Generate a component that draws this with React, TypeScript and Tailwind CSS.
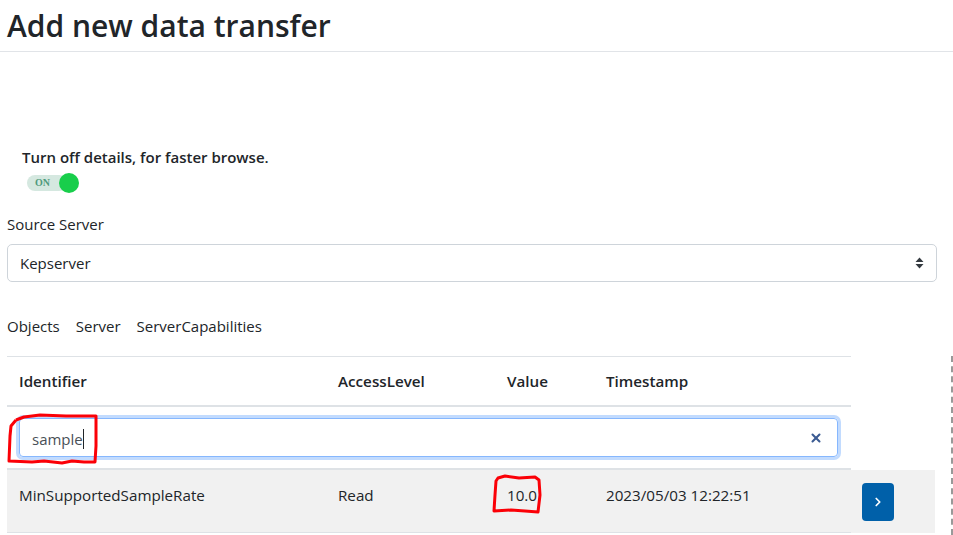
import { ChevronRight, X } from 'lucide-react';

const font = 'font-["Open_Sans","Noto_Sans",sans-serif]';

function Toggle() {
  return (
    <div className="relative ml-[20px] mt-[6px] h-[20px] w-[52px]">
      <div className="absolute left-0 top-[2px] flex h-[16px] w-[40px] items-center rounded-full bg-[#d5e8e0] pl-[8px]">
        <span className='font-["Liberation_Serif",serif] text-[10px] font-bold leading-none text-[#4f9a7c]'>ON</span>
      </div>
      <div className="absolute right-0 top-0 h-[20px] w-[20px] rounded-full bg-[#18ce4b]" />
    </div>
  );
}

function Scribbles() {
  return (
    <>
      <svg className="absolute left-[6px] top-[412px]" width="94" height="54" viewBox="0 0 94 54" fill="none">
        <path d="M10 8 L5 14 L4 24 L3 49 L26 50 L38 49 L56 51 L66 49 L78 50 L89 50 L90 34 L90 4 L60 4 L34 3 L18 5 L10 8" stroke="#fb0007" strokeWidth="3" strokeLinejoin="round" />
      </svg>
      <svg className="absolute left-[491px] top-[473px]" width="52" height="42" viewBox="0 0 52 42" fill="none">
        <path d="M5 8 L4 22 L3 38 L20 37 L34 38 L47 39 L49 22 L48 7 L44 4 L28 5 L14 3 L7 5 Z" stroke="#fb0007" strokeWidth="3" strokeLinejoin="round" />
      </svg>
    </>
  );
}

export default function App() {
  return (
    <div className={`relative h-[535px] w-[953px] overflow-hidden bg-white text-[15px] text-[#212529] ${font}`}>
      <header className="h-[52px] border-b border-[#e1e4e8] pl-[7px]">
        <h1 className="text-[30px] font-semibold leading-[52px]">Add new data transfer</h1>
      </header>

      <div className="px-[7px] pt-[95px]">
        <div className="ml-[15px] font-semibold leading-[20px]">Turn off details, for faster browse.</div>
        <Toggle />

        <label className="mt-[20px] block leading-[22px]">Source Server</label>
        <div className="mt-[9px] flex h-[38px] w-[930px] items-center justify-between rounded-[5px] border border-[#ced4da] pl-[12px] pr-[12px]">
          <span>Kepserver</span>
          <svg width="9" height="12" viewBox="0 0 9 12" fill="#343a40">
            <path d="M4.5 0.5 L8.5 5 H0.5 Z M0.5 7 H8.5 L4.5 11.5 Z" />
          </svg>
        </div>

        <nav className="mt-[33px] flex gap-[16px] leading-[22px]">
          <span>Objects</span>
          <span>Server</span>
          <span>ServerCapabilities</span>
        </nav>

        <div className="mt-[19px] w-[844px] border-t border-[#dee2e6]">
          <div className="grid h-[50px] grid-cols-[319px_169px_99px_1fr] items-center border-b-2 border-[#dee2e6] pl-[12px] text-[15.2px] font-semibold">
            <span>Identifier</span>
            <span>AccessLevel</span>
            <span>Value</span>
            <span>Timestamp</span>
          </div>
          <div className="flex h-[63px] items-center border-b-2 border-[#dee2e6] pl-[12px] pr-[13px]">
            <div className="flex h-[39px] w-full items-center justify-between rounded-[4px] border border-[#86b7fe] pl-[12px] pr-[14px] ring-[3px] ring-[#c2dbfe]">
              <span className="text-[#495057]">
                sample<span className="inline-block h-[20px] w-px translate-y-[4px] bg-[#212529]" />
              </span>
              <X size={14} strokeWidth={3.5} className="text-[#3b5b92]" />
            </div>
          </div>
        </div>

        <div className="flex h-[63px] w-[928px] bg-[#f1f1f1]">
          <div className="grid h-full w-[844px] grid-cols-[319px_169px_99px_1fr] items-start border-b border-[#dee2e6] pl-[12px] pt-[14px] text-[15.2px]">
            <span>MinSupportedSampleRate</span>
            <span>Read</span>
            <span>10.0</span>
            <span>2023/05/03 12:22:51</span>
          </div>
          <div className="ml-[11px] mt-[13px] flex h-[38px] w-[32px] items-center justify-center rounded-[4px] bg-[#0060a9]">
            <ChevronRight size={14} strokeWidth={3} className="text-white" />
          </div>
        </div>
      </div>

      <div className="absolute right-0 top-[356px] h-[179px] border-r-2 border-dashed border-[#999]" />
      <Scribbles />
    </div>
  );
}
